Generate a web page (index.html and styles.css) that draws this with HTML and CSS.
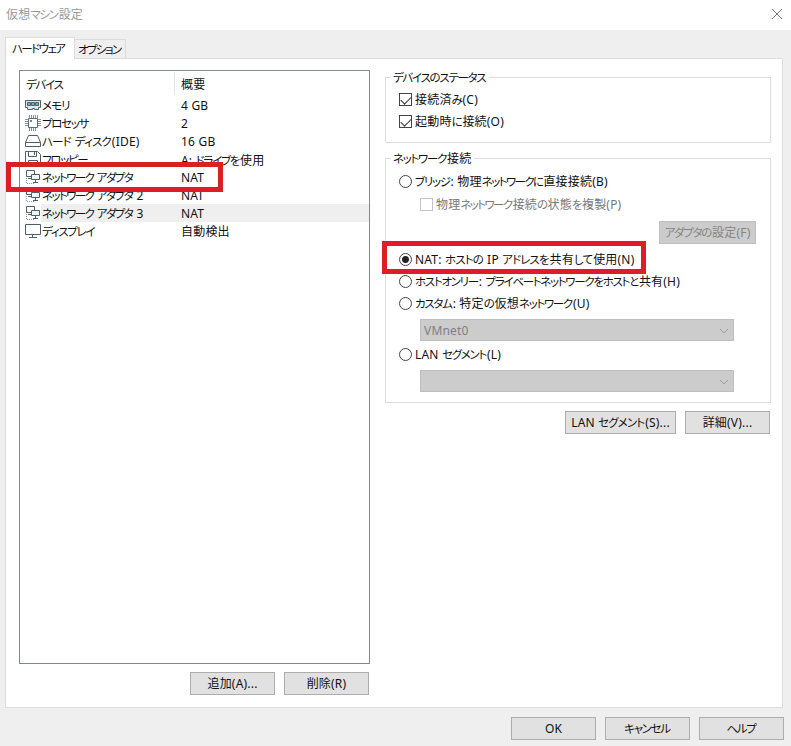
FILE: index.html
```html
<!DOCTYPE html>
<html lang="ja">
<head>
<meta charset="utf-8">
<title>仮想マシン設定</title>
<link rel="stylesheet" href="styles.css">
</head>
<body>
<svg class="defs" width="0" height="0">
  <symbol id="net" viewBox="0 0 16 16">
    <path d="M1.500 1.500h8v6h-8zM3 9.500h3" fill="none" stroke="#4d6068"/>
    <path d="M6.500 5.500h8v5h-8z" fill="#eef7fa" stroke="#4d6068"/>
    <path d="M10.500 11v2M8 13.500h5" fill="none" stroke="#4d6068"/>
    <path d="M1.500 9v5.500h8" fill="none" stroke="#87939a" stroke-dasharray="1 1"/>
  </symbol>
</svg>
<header class="titlebar">
  <span class="title">仮想<i>マシン</i>設定</span>
  <svg class="close" width="12" height="12" viewBox="0 0 12 12"><path d="M1 1l10 10M11 1L1 11" fill="none" stroke="#777"/></svg>
</header>
<nav class="tabs">
  <div class="tab active"><i class="tight">ハードウェア</i></div>
  <div class="tab"><i class="tight">オプション</i></div>
</nav>
<main class="panel">
  <section class="left">
    <div class="list">
      <div class="head"><span class="name"><i>デバイス</i></span><span class="summary">概要</span></div>
      <div class="row"><svg width="16" height="16" viewBox="0 0 16 16"><path d="M.5 3.500h15v7h-2v2h-4v-1h-2v1h-5v-2h-2z" fill="#dceaf0" stroke="#4d6068"/><path d="M2.500 5.500h3v3h-3zM6.500 5.500h3v3h-3zM10.500 5.500h3v3h-3z" fill="#8aa5b1" stroke="#4d6068"/></svg><span class="name"><i class="loose">メモリ</i></span><span class="summary">4 GB</span></div>
      <div class="row"><svg width="16" height="16" viewBox="0 0 16 16"><path d="M3.500 3.500h9v9h-9z" fill="#fff" stroke="#5d6d74"/><path d="M4.500 0v3M6.500 0v3M8.500 0v3M10.500 0v3M12.500 0v3M4.500 13v3M6.500 13v3M8.500 13v3M10.500 13v3M0 4.500h3M0 6.500h3M0 8.500h3M0 10.500h3M13 4.500h3M13 6.500h3M13 8.500h3M13 10.500h3" stroke="#87939a"/><path d="M5 5h2v2H5z" fill="#75838a"/></svg><span class="name"><i>プロセッサ</i></span><span class="summary">2</span></div>
      <div class="row"><svg width="16" height="16" viewBox="0 0 16 16"><path d="M3.500 2.500h9l3 7v4H.5v-4zM.5 9.500h15" fill="none" stroke="#4d6068"/></svg><span class="name"><i class="loose">ハード ディスク</i>(IDE)</span><span class="summary">16 GB</span></div>
      <div class="row"><svg width="16" height="16" viewBox="0 0 16 16"><path d="M.5 .5h12l3 3v12H.5zM3.500 .5v5h8v-5M9.500 1v3M3.500 15V9.500h9V15M5 11.500h6" fill="none" stroke="#4d6068"/></svg><span class="name"><i>フロッピー</i></span><span class="summary">A: <i>ドライブを</i>使用</span></div>
      <div class="row"><svg width="16" height="16"><use href="#net"/></svg><span class="name"><i class="tight">ネットワーク アダプタ</i></span><span class="summary">NAT</span><div class="mark mark-device"></div></div>
      <div class="row"><svg width="16" height="16"><use href="#net"/></svg><span class="name"><i class="tight">ネットワーク アダプタ</i> 2</span><span class="summary">NAT</span></div>
      <div class="row selected"><svg width="16" height="16"><use href="#net"/></svg><span class="name"><i class="tight">ネットワーク アダプタ</i> 3</span><span class="summary">NAT</span></div>
      <div class="row"><svg width="16" height="16" viewBox="0 0 16 16"><path d="M.5 1.500h15v10H.5zM7.500 12v2M4 14.500h8" fill="none" stroke="#4d6068"/></svg><span class="name"><i>ディスプレイ</i></span><span class="summary">自動検出</span></div>
    </div>
    <div class="buttons">
      <button><span>追加(A)...</span></button>
      <button><span>削除(R)</span></button>
    </div>
  </section>
  <section class="right">
    <div class="group status">
      <div class="legend"><i>デバイスのステータス</i></div>
      <div class="opt"><b class="box on"></b><span>接続済<i>み</i>(C)</span></div>
      <div class="opt"><b class="box on"></b><span>起動時<i>に</i>接続(O)</span></div>
    </div>
    <div class="group network">
      <div class="legend"><i>ネットワーク</i>接続</div>
      <div class="opt"><b class="radio"></b><span><i>ブリッジ</i>: 物理<i class="tight">ネットワークに</i>直接接続(B)</span></div>
      <div class="opt sub"><b class="box"></b><span>物理<i class="tight">ネットワーク</i>接続<i class="tight">の</i>状態<i class="tight">を</i>複製(P)</span></div>
      <button class="adapter" disabled><span><i>アダプタの</i>設定(F)</span></button>
      <div class="opt nat"><b class="radio on"></b><span>NAT: <i class="loose">ホストの</i> IP <i class="loose">アドレスを</i>共有<i class="loose">して</i>使用(N)</span><div class="mark mark-nat"></div></div>
      <div class="opt"><b class="radio"></b><span><i>ホストオンリー</i>: <i>プライベートネットワークをホストと</i>共有(H)</span></div>
      <div class="opt"><b class="radio"></b><span><i>カスタム</i>: 特定<i>の</i>仮想<i>ネットワーク</i>(U)</span></div>
      <div class="select"><span>VMnet0</span><svg width="10" height="6" viewBox="0 0 10 6"><path d="M1 1l4 4 4-4" fill="none" stroke="#9b9b9b"/></svg></div>
      <div class="opt lan"><b class="radio"></b><span>LAN <i>セグメント</i>(L)</span></div>
      <div class="select"><span></span><svg width="10" height="6" viewBox="0 0 10 6"><path d="M1 1l4 4 4-4" fill="none" stroke="#9b9b9b"/></svg></div>
    </div>
    <div class="buttons">
      <button class="wide"><span>LAN <i class="loose">セグメント</i>(S)...</span></button>
      <button><span>詳細(V)...</span></button>
    </div>
  </section>
</main>
<footer class="footer">
  <button><span>OK</span></button>
  <button><span><i>キャンセル</i></span></button>
  <button><span><i>ヘルプ</i></span></button>
</footer>
</body>
</html>
```
FILE: styles.css
```css
* { box-sizing: border-box; }
body {
  margin: 0;
  width: 791px;
  height: 746px;
  overflow: hidden;
  background: #efefef;
  color: #111;
  font: 12px/16px "Noto Sans", "Noto Sans CJK JP", sans-serif;
  letter-spacing: .2px;
  white-space: nowrap;
}
/* Kana runs are set tighter than kanji and Latin text. */
i {
  margin-right: 1px;
  font-style: normal;
  font-size: 11.5px;
  font-family: "Noto Sans CJK JP", sans-serif;
  font-feature-settings: "palt";
  letter-spacing: -1.3px;
  word-spacing: 2.5px;
}
i.tight { letter-spacing: -1.6px; }
i.loose { letter-spacing: -.9px; }
svg { display: block; flex: none; }
.defs { position: absolute; }
.titlebar {
  height: 30px;
  padding: 0 8px 2px 6px;
  display: flex;
  align-items: center;
  justify-content: space-between;
  background: #fff;
  color: #999;
}
.tabs {
  height: 28px;
  padding-left: 5px;
  display: flex;
  align-items: flex-end;
}
.tab {
  width: 51px;
  height: 19px;
  padding: 1px 0 0 3px;
  border: 1px solid #dcdcdc;
  border-width: 1px 1px 0 0;
}
.tab.active {
  width: 70px;
  height: 22px;
  margin-bottom: -1px;
  padding: 2px 0 0 6px;
  border-left-width: 1px;
  background: #fff;
  position: relative;
}
.panel {
  width: 778px;
  height: 650px;
  margin-left: 5px;
  padding: 11px 11px 0 13px;
  border: 1px solid #dcdcdc;
  background: #fff;
  display: flex;
  gap: 15px;
}
.left { width: 351px; }
.right { width: 386px; padding-top: 7px; }
.list {
  height: 594px;
  border: 1px solid #828790;
}
.head {
  height: 25px;
  padding-left: 6px;
  display: flex;
  align-items: center;
}
.head .name { width: 149px; height: 23px; padding-top: 4px; border-right: 1px solid #e2e2e2; }
.head .summary { padding: 2px 0 0 6px; }
.row {
  position: relative;
  height: 18px;
  padding-left: 5px;
  display: flex;
  align-items: center;
}
.row .name { width: 132px; height: 18px; padding: 1px 0 0 1px; }
.row .summary { flex: 1; height: 18px; padding: 2px 0 0 8px; }
.selected .name, .selected .summary { background: #efefef; }
.mark {
  position: absolute;
  z-index: 2;
  border: 5px solid #dc1f26;
}
.mark-device { left: -14px; top: -6px; width: 217px; height: 30px; }
.mark-nat { left: -17px; top: -7px; width: 264px; height: 33px; }
.buttons {
  display: flex;
  justify-content: flex-end;
  gap: 9px;
  margin: 8px 1px 0 0;
}
button {
  width: 85px;
  height: 23px;
  padding: 0;
  border: 1px solid #adadad;
  background: #e1e1e1;
  color: #111;
  font: inherit;
  letter-spacing: inherit;
  white-space: nowrap;
}
button.wide { width: 111px; }
button:disabled { background: #ccc; border-color: #bfbfbf; color: #858585; }
.group {
  border: 1px solid #dcdcdc;
  padding-left: 13px;
}
.legend {
  width: fit-content;
  height: 16px;
  margin: -9px 0 0 -8px;
  padding: 0 3px 0 2px;
  background: #fff;
}
.status { height: 66px; }
.status .legend { margin-bottom: 3px; }
.network { height: 245px; margin-top: 15px; }
.network .legend { margin-bottom: 4px; }
.opt {
  position: relative;
  height: 22px;
  display: flex;
  align-items: center;
  gap: 3px;
}
.opt.sub { height: 25px; margin-left: 21px; color: #777; }
.box, .radio {
  width: 13px;
  height: 13px;
  border: 1px solid #444;
  background: #fff;
}
.sub .box { border-color: #c4c4c4; }
.box.on::after {
  content: "";
  display: block;
  width: 9px;
  height: 5px;
  margin: 2px 0 0 1px;
  border: solid #333;
  border-width: 0 0 1px 1px;
  transform: rotate(-45deg);
}
.radio { border-radius: 50%; }
.radio.on { background: radial-gradient(circle, #222 3px, #fff 4px); }
.adapter { display: block; width: 97px; margin: 4px 0 0 260px; }
.nat { margin-top: 4px; }
.select {
  width: 314px;
  height: 22px;
  margin: 5px 0 0 21px;
  padding: 2px 4px 0 3px;
  display: flex;
  align-items: center;
  justify-content: space-between;
  border: 1px solid #bfbfbf;
  background: #ccc;
  color: #808080;
}
.lan { margin-top: 2px; }
.footer {
  display: flex;
  justify-content: flex-end;
  gap: 9px;
  padding: 9px 7px 0 0;
}
```
